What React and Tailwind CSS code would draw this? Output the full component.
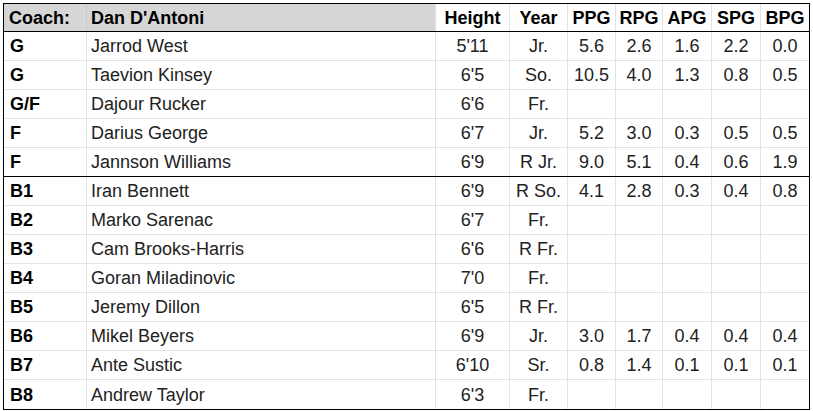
import React from "react";

const rows = [
  ["G", "Jarrod West", "5'11", "Jr.", "5.6", "2.6", "1.6", "2.2", "0.0"],
  ["G", "Taevion Kinsey", "6'5", "So.", "10.5", "4.0", "1.3", "0.8", "0.5"],
  ["G/F", "Dajour Rucker", "6'6", "Fr.", "", "", "", "", ""],
  ["F", "Darius George", "6'7", "Jr.", "5.2", "3.0", "0.3", "0.5", "0.5"],
  ["F", "Jannson Williams", "6'9", "R Jr.", "9.0", "5.1", "0.4", "0.6", "1.9"],
  ["B1", "Iran Bennett", "6'9", "R So.", "4.1", "2.8", "0.3", "0.4", "0.8"],
  ["B2", "Marko Sarenac", "6'7", "Fr.", "", "", "", "", ""],
  ["B3", "Cam Brooks-Harris", "6'6", "R Fr.", "", "", "", "", ""],
  ["B4", "Goran Miladinovic", "7'0", "Fr.", "", "", "", "", ""],
  ["B5", "Jeremy Dillon", "6'5", "R Fr.", "", "", "", "", ""],
  ["B6", "Mikel Beyers", "6'9", "Jr.", "3.0", "1.7", "0.4", "0.4", "0.4"],
  ["B7", "Ante Sustic", "6'10", "Sr.", "0.8", "1.4", "0.1", "0.1", "0.1"],
  ["B8", "Andrew Taylor", "6'3", "Fr.", "", "", "", "", ""],
];

const grid =
  "grid grid-cols-[83px_349px_74px_58px_48px_47px_49px_49px_48px]";

export default function App() {
  return (
    <div
      className="w-[813px] h-[411px] bg-white pl-[3px] pt-[3px] overflow-hidden"
      style={{ fontFamily: '"Liberation Sans", Arial, sans-serif' }}
    >
      <div className="w-[807px] border border-black text-[18px] leading-none">
        <div className={`${grid} h-[28px] border-b border-black`}>
          <div className="bg-[#d6d6d6] border-r border-[#c8c8c8] flex items-center pl-[5px] font-bold text-black">
            Coach:
          </div>
          <div className="bg-[#d6d6d6] border-r border-[#e2e2e2] flex items-center pl-[4px] font-bold text-black">
            Dan D'Antoni
          </div>
          {["Height", "Year", "PPG", "RPG", "APG", "SPG", "BPG"].map((h, i) => (
            <div
              key={h}
              className={`flex items-center justify-center font-bold text-black ${
                i < 6 ? "border-r border-[#e2e2e2]" : ""
              }`}
            >
              {h}
            </div>
          ))}
        </div>
        {rows.map((r, ri) => (
          <div
            key={ri}
            className={`${grid} h-[29px] ${
              ri === 4
                ? "border-b border-black"
                : ri === rows.length - 1
                ? ""
                : "border-b border-[#e2e2e2]"
            }`}
          >
            {r.map((c, ci) => (
              <div
                key={ci}
                className={`flex items-center ${
                  ci < 8 ? "border-r border-[#e2e2e2]" : ""
                } ${
                  ci === 0
                    ? "pl-[6px] font-bold text-black"
                    : ci === 1
                    ? "pl-[4px] text-[#222]"
                    : "justify-center text-[#222]"
                }`}
              >
                {c}
              </div>
            ))}
          </div>
        ))}
      </div>
    </div>
  );
}
